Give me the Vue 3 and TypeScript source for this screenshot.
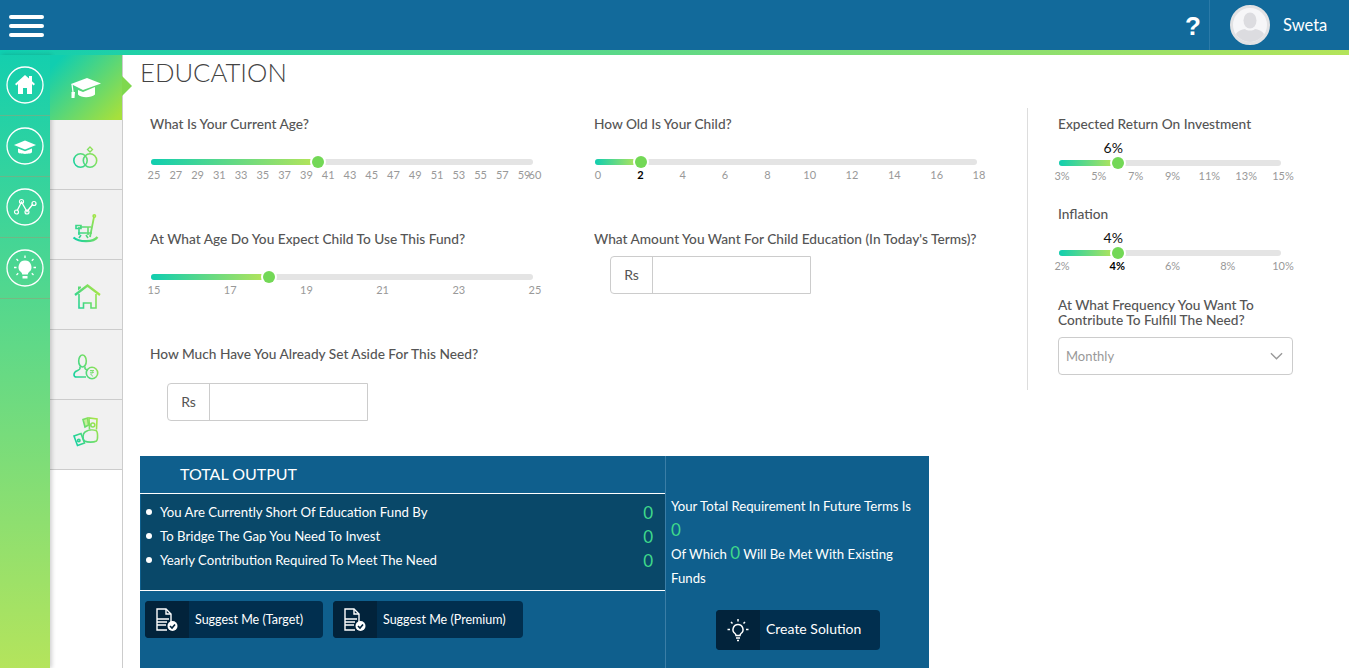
<script setup lang="ts">
interface Slider {
  kind: 'slider'
  label: string
  min: number
  max: number
  value: number
  ticks: number[]
  suffix?: string
  bubble?: boolean
}

interface Amount {
  kind: 'amount'
  label: string
  indent?: boolean
}

const range = (from: number, to: number, step: number) => {
  const out: number[] = []
  for (let i = from; i <= to; i += step) out.push(i)
  return out
}

const fields: (Slider | Amount)[] = [
  { kind: 'slider', label: 'What Is Your Current Age?', min: 25, max: 60, value: 40, ticks: [...range(25, 59, 2), 60] },
  { kind: 'slider', label: 'How Old Is Your Child?', min: 0, max: 18, value: 2, ticks: range(0, 18, 2) },
  { kind: 'slider', label: 'At What Age Do You Expect Child To Use This Fund?', min: 15, max: 25, value: 18, ticks: range(15, 25, 2) },
  { kind: 'amount', label: "What Amount You Want For Child Education (In Today's Terms)?" },
  { kind: 'amount', label: 'How Much Have You Already Set Aside For This Need?', indent: true }
]

const rates: Slider[] = [
  { kind: 'slider', label: 'Expected Return On Investment', min: 3, max: 15, value: 6, ticks: range(3, 15, 2), suffix: '%', bubble: true },
  { kind: 'slider', label: 'Inflation', min: 2, max: 10, value: 4, ticks: range(2, 10, 2), suffix: '%', bubble: true }
]

const outputs = [
  'You Are Currently Short Of Education Fund By',
  'To Bridge The Gap You Need To Invest',
  'Yearly Contribution Required To Meet The Need'
]

const pct = (s: Slider, v: number) => ((v - s.min) / (s.max - s.min)) * 100 + '%'
</script>

<template>
  <div class="page">
    <svg class="defs" width="0" height="0" aria-hidden="true">
      <defs>
        <linearGradient id="ico" gradientUnits="userSpaceOnUse" x1="3" y1="26" x2="29" y2="12">
          <stop offset="0" stop-color="#10d0a4" />
          <stop offset="1" stop-color="#a4e548" />
        </linearGradient>
      </defs>
    </svg>

    <header class="topbar">
      <div class="burger"><span></span><span></span><span></span></div>
      <div class="help">?</div>
      <div class="user">
        <svg class="avatar" viewBox="0 0 40 40">
          <circle cx="20" cy="20" r="18.500" fill="#f6f6f8" stroke="#e2e2e4" stroke-width="3" />
          <ellipse cx="20" cy="15.500" rx="6.500" ry="8" fill="#dcdce0" />
          <path d="M6 29c1.500-3 6-4.500 9-5 2 2 8 2 10 0 3 .5 7.500 2 9 5-2 4-8 8-14 8s-12-4-14-8z" fill="#dcdce0" />
        </svg>
        <span>Sweta</span>
      </div>
    </header>
    <div class="stripe"></div>

    <div class="body">
      <nav class="rail">
        <a class="rail-item">
          <svg viewBox="0 0 38 38">
            <circle cx="19" cy="19" r="18" class="ring" />
            <path d="M19 9l-10 9 1.400 1.500 1.600-1.400V28h5v-6h4v6h5v-9.900l1.600 1.400L29 18l-3-2.700V10h-3v2.600z" fill="#fff" />
          </svg>
        </a>
        <a class="rail-item">
          <svg viewBox="0 0 38 38">
            <circle cx="19" cy="19" r="18" class="ring" />
            <path d="M8 18l11-4.500L30 18l-11 4.500z" fill="#fff" />
            <path d="M12 21.500v3.500c0 2.500 14 2.500 14 0v-3.500l-7 2.800z" fill="#fff" />
          </svg>
        </a>
        <a class="rail-item">
          <svg viewBox="0 0 38 38">
            <circle cx="19" cy="19" r="18" class="ring" />
            <path d="M11 23l4.500-9 5.500 9.500 6-7.500" fill="none" stroke="#fff" stroke-width="1.300" />
            <circle cx="10.500" cy="24" r="2" class="node" />
            <circle cx="15.500" cy="13.500" r="2" class="node" />
            <circle cx="21" cy="24" r="2" class="node" />
            <circle cx="28" cy="15.500" r="2" class="node" />
          </svg>
        </a>
        <a class="rail-item">
          <svg viewBox="0 0 38 38">
            <circle cx="19" cy="19" r="18" class="ring" />
            <path d="M19 11.500a6.500 6.500 0 0 0-4 11.600c.8.700 1.200 1.500 1.200 2.400h5.600c0-.9.400-1.700 1.200-2.400a6.500 6.500 0 0 0-4-11.600z" fill="#fff" />
            <path d="M16.500 27h5v2.500h-5z" fill="#fff" />
            <path d="M19 6.500v2.500M10.500 10l1.700 1.700M27.500 10l-1.700 1.700M8 18.500h2.500M27.500 18.500H30M10.500 26l1.700-1.700M27.500 26l-1.700-1.700" stroke="#fff" stroke-width="1.300" fill="none" />
          </svg>
        </a>
      </nav>

      <aside class="goals">
        <a class="goal goal-active">
          <svg viewBox="0 0 32 24" class="cap">
            <path d="M1 8L17 2l14 5.500L13 14z" fill="#fff" />
            <path d="M8 14v4.500c3 3.500 13 3.500 17 0V11l-12 5z" fill="#fff" />
            <path d="M2 8l1 8" stroke="#fff" stroke-width="1.200" />
            <path d="M1.500 16h3.500l-.5 6h-3z" fill="#fff" />
          </svg>
        </a>
        <a class="goal">
          <svg viewBox="0 0 32 32" class="line-ico">
            <circle cx="10.500" cy="19.500" r="6.700" />
            <circle cx="20" cy="19.500" r="6.700" />
            <path d="M20 6l2.500 2.500L20 11l-2.500-2.500z" stroke-width="1.300" />
          </svg>
        </a>
        <a class="goal">
          <svg viewBox="0 0 32 32" class="line-ico">
            <path d="M24 6l-4 20" stroke-width="1.800" />
            <circle cx="24.300" cy="5" r="1.200" />
            <path d="M6 14.500h5v3H6zM10 16h11M8 22h14M9 16v8M18 16v8" />
            <path d="M11 24l-2 3M16 24l2 3" />
            <path d="M3.500 26.500c6 5 20 5 24-.5" stroke-width="2.200" />
          </svg>
        </a>
        <a class="goal">
          <svg viewBox="0 0 32 32" class="line-ico">
            <path d="M5 14L17.500 4.500 30 14" stroke-width="2.200" />
            <path d="M9 13v14h4.500v-5h7.500v5H26V13" />
            <path d="M8 9.500V5.500h3V7z" fill="url(#ico)" stroke="none" />
          </svg>
        </a>
        <a class="goal">
          <svg viewBox="0 0 32 32" class="line-ico">
            <ellipse cx="12.500" cy="10" rx="3.800" ry="6" />
            <path d="M10 15.500v2c0 1-1.500 1.500-3 2.200-2 .8-3 2-3 4 0 1.500 1 2.300 2.500 2.300H16" />
            <path d="M15 15.500v2c.2.800 1.500 1.300 3 1.700" />
            <circle cx="22" cy="22" r="5.700" />
            <path d="M20 19.500h4M20 21.300h4M21 19.500c2.400 0 2.400 3.600-.5 3.600l2.600 2.400" stroke-width=".9" />
          </svg>
        </a>
        <a class="goal">
          <svg viewBox="0 0 32 44" class="line-ico tall">
            <path d="M15 17c3-2 8-2.500 11-1.500 2 1 2 9 .5 10.500-3 1.500-9 1.500-12 0-2-1.500-2-7.500.5-9z" />
            <path d="M19.500 14.500L19 3l8 1-.5 10.500" />
            <circle cx="22.800" cy="10" r="2" />
            <path d="M13 4.500l4.500-1.500 1 7-3.500 2z" fill="#c9ee9c" />
            <path d="M4 21l7-2.500 3.500 9.500-7 2.500z" />
            <circle cx="8.800" cy="25.500" r="1.200" />
          </svg>
        </a>
      </aside>

      <main class="main">
        <h1 class="title">EDUCATION</h1>

        <div class="top">
          <section class="form">
            <div v-for="f in fields" :key="f.label" class="field">
              <label class="lbl">{{ f.label }}</label>
              <div v-if="f.kind === 'slider'" class="slider">
                <div class="track"></div>
                <div class="scale">
                  <div class="fill" :style="{ width: pct(f, f.value) }"></div>
                  <i class="thumb" :style="{ left: pct(f, f.value) }"></i>
                  <span v-for="t in f.ticks" :key="t" class="tick" :class="{ on: t === f.value }" :style="{ left: pct(f, t) }">{{ t }}</span>
                </div>
              </div>
              <div v-else class="amount" :class="{ indent: f.indent }">
                <span class="addon">Rs</span>
                <input class="amount-input" type="text" />
              </div>
            </div>
          </section>

          <section class="side">
            <div v-for="r in rates" :key="r.label" class="rate">
              <label class="lbl">{{ r.label }}</label>
              <div class="slider short">
                <div class="track"></div>
                <div class="scale">
                  <div class="fill" :style="{ width: pct(r, r.value) }"></div>
                  <i class="thumb" :style="{ left: pct(r, r.value) }"></i>
                  <b class="bubble" :style="{ left: pct(r, r.value) }">{{ r.value }}{{ r.suffix }}</b>
                  <span v-for="t in r.ticks" :key="t" class="tick" :class="{ on: t === r.value }" :style="{ left: pct(r, t) }">{{ t }}{{ r.suffix }}</span>
                </div>
              </div>
            </div>
            <label class="lbl lbl-two">At What Frequency You Want To Contribute To Fulfill The Need?</label>
            <div class="select">
              <span>Monthly</span>
              <svg viewBox="0 0 14 8" width="13" height="8"><path d="M1 1l6 6 6-6" fill="none" stroke="#999" stroke-width="1.500" /></svg>
            </div>
          </section>
        </div>

        <section class="output">
          <div class="out-left">
            <h2 class="out-title">TOTAL OUTPUT</h2>
            <ul class="out-list">
              <li v-for="o in outputs" :key="o"><span class="dot"></span><span class="out-text">{{ o }}</span><em class="zero">0</em></li>
            </ul>
            <div class="out-btns">
              <button class="btn" type="button">
                <span class="btn-ico">
                  <svg viewBox="0 0 24 24" width="24" height="24" class="doc">
                    <path d="M16 16V6l-5-5H2v21h10" />
                    <path d="M11 1v5h5M2 11h12M2 14h10M2 17h9" />
                    <circle cx="17.500" cy="18" r="5" fill="#fff" stroke="none" />
                    <path d="M15 18l2 2 3-3.500" stroke="#02233b" stroke-width="1.600" />
                  </svg>
                </span>
                <span class="btn-txt">Suggest Me (Target)</span>
              </button>
              <button class="btn btn-wide" type="button">
                <span class="btn-ico">
                  <svg viewBox="0 0 24 24" width="24" height="24" class="doc">
                    <path d="M16 16V6l-5-5H2v21h10" />
                    <path d="M11 1v5h5M2 11h12M2 14h10M2 17h9" />
                    <circle cx="17.500" cy="18" r="5" fill="#fff" stroke="none" />
                    <path d="M15 18l2 2 3-3.500" stroke="#02233b" stroke-width="1.600" />
                  </svg>
                </span>
                <span class="btn-txt">Suggest Me (Premium)</span>
              </button>
            </div>
          </div>
          <div class="out-right">
            <p>Your Total Requirement In Future Terms Is</p>
            <p class="big-line"><em class="zero">0</em></p>
            <p>Of Which <em class="zero">0</em> Will Be Met With Existing Funds</p>
            <button class="btn btn-create" type="button">
              <span class="btn-ico">
                <svg viewBox="0 0 24 24" width="24" height="24" fill="none" stroke="#fff" stroke-width="1.500">
                  <path d="M12 6.500a5 5 0 0 0-3 9c.6.500 1 1.200 1 2h4c0-.8.400-1.500 1-2a5 5 0 0 0-3-9z" />
                  <path d="M10 20h4M11 22.500h2M12 1v2.500M5 4l1.500 1.500M19 4l-1.500 1.500M1.500 11.500H4M20 11.500h2.500" />
                </svg>
              </span>
              <span class="btn-txt">Create Solution</span>
            </button>
          </div>
        </section>
      </main>
    </div>
  </div>
</template>

<style>
html,
body {
  margin: 0;
  overflow: hidden;
}
</style>

<style scoped>
.page {
  height: 668px;
  overflow: hidden;
  font-family: "Lato", "Open Sans", sans-serif;
  color: #555;
  display: flex;
  flex-direction: column;
}
.defs {
  position: absolute;
}
.topbar {
  height: 50px;
  flex: none;
  background: #126a9b;
  display: flex;
  align-items: stretch;
}
.burger {
  width: 35px;
  margin: 15px auto 0 9px;
  display: flex;
  flex-direction: column;
  gap: 5px;
}
.burger span {
  display: block;
  height: 4px;
  border-radius: 2px;
  background: #fff;
}
.help {
  width: 33px;
  padding-left: 1px;
  box-sizing: border-box;
  text-align: center;
  color: #fff;
  font: bold 26px/52px "Liberation Sans", sans-serif;
}
.user {
  width: 140px;
  border-left: 1px solid #2a7aa8;
  display: flex;
  align-items: center;
  padding-left: 20px;
  gap: 13px;
  box-sizing: border-box;
  color: #fff;
  font-size: 16.500px;
}
.avatar {
  width: 40px;
  height: 40px;
}
.stripe {
  height: 5px;
  flex: none;
  background: linear-gradient(90deg, #10ceb0, #b4e45a);
}
.body {
  flex: 1;
  display: flex;
  min-height: 0;
}
.rail {
  width: 50px;
  flex: none;
  background: linear-gradient(180deg, #14cfae, #b4e45c);
  position: relative;
  z-index: 1;
  box-shadow: 2px 0 4px rgba(0, 0, 0, 0.18);
}
.rail-item {
  height: 60px;
  border-bottom: 1px solid rgba(150, 160, 120, 0.55);
  display: flex;
  align-items: center;
  justify-content: center;
}
.rail-item svg {
  width: 38px;
  height: 38px;
}
.ring {
  fill: none;
  stroke: #fff;
  stroke-width: 1.300;
}
.node {
  fill: none;
  stroke: #fff;
  stroke-width: 1.200;
}
.goals {
  width: 73px;
  flex: none;
  box-sizing: border-box;
  border-right: 1px solid #ccc;
}
.goal {
  height: 69px;
  box-sizing: content-box;
  background: #f1f1f1;
  border-bottom: 1px solid #ccc;
  display: flex;
  align-items: center;
  justify-content: center;
  position: relative;
}
.goal:not(.goal-active) {
  height: 65px;
  padding-top: 4px;
}
.goal-active {
  height: 65px;
  border-bottom: 0;
  width: 72px;
  background: linear-gradient(135deg, #10ceb0 10%, #a6e03c 95%);
  z-index: 2;
}
.goal-active::after {
  content: "";
  position: absolute;
  left: 72px;
  top: 21px;
  border-style: solid;
  border-width: 10px 0 10px 10px;
  border-color: transparent transparent transparent #7fd84e;
}
.cap {
  width: 32px;
  height: 24px;
}
.line-ico {
  width: 32px;
  height: 32px;
  fill: none;
  stroke: url(#ico);
  stroke-width: 1.600;
}
.line-ico.tall {
  height: 44px;
}
.main {
  flex: 1;
  min-width: 0;
  padding-left: 17px;
}
.title {
  margin: 1px 0 0;
  height: 35px;
  font-size: 25.700px;
  line-height: 33px;
  font-weight: 300;
  color: #444;
}
.top {
  display: flex;
  height: 365px;
  padding-top: 17px;
  box-sizing: border-box;
}
.form {
  width: 887px;
  flex: none;
  box-sizing: border-box;
  padding: 6px 0 0 10px;
  display: grid;
  grid-template-columns: 444px 433px;
  grid-auto-rows: 115px;
}
.lbl {
  display: block;
  height: 20px;
  font-size: 13.700px;
  line-height: 20px;
  font-weight: 500;
  color: #555;
}
.slider {
  position: relative;
  width: 382px;
  margin: 25px 0 0 1px;
  height: 30px;
}
.slider.short {
  width: 222px;
  margin-top: 0;
}
.track {
  height: 6px;
  border-radius: 3px;
  background: #e4e4e4;
}
.scale {
  position: absolute;
  left: 3px;
  right: -2px;
  top: 0;
  height: 6px;
}
.fill {
  position: absolute;
  left: -3px;
  top: 0;
  height: 6px;
  border-radius: 3px 0 0 3px;
  background: linear-gradient(90deg, #10ceb0, #b4e45a);
}
.thumb {
  position: absolute;
  top: -3px;
  width: 12px;
  height: 12px;
  margin-left: -5px;
  border-radius: 50%;
  background: #73d856;
  box-shadow: 0 0 0 2px #fff;
}
.tick {
  position: absolute;
  top: 9px;
  transform: translateX(-50%);
  font-size: 11px;
  line-height: 14px;
  color: #999;
  white-space: nowrap;
}
.tick.on {
  color: #000;
  font-weight: 700;
}
.bubble {
  position: absolute;
  top: -21px;
  transform: translateX(-50%);
  margin-left: -4px;
  font-size: 14px;
  line-height: 18px;
  font-weight: 400;
  color: #111;
}
.amount {
  display: flex;
  width: 201px;
  height: 38px;
  margin: 7px 0 0 16px;
  box-sizing: border-box;
  border: 1px solid #ccc;
  border-radius: 4px 0 0 4px;
}
.amount.indent {
  margin: 19px 0 0 17px;
}
.addon {
  width: 42px;
  flex: none;
  box-sizing: border-box;
  border-right: 1px solid #ccc;
  text-align: center;
  font-size: 14px;
  line-height: 35px;
  color: #555;
}
.amount-input {
  flex: 1;
  min-width: 0;
  border: 0;
  outline: 0;
  padding: 0;
  background: #fff;
}
.side {
  width: 266px;
  height: 282px;
  box-sizing: border-box;
  border-left: 1px solid #ddd;
  padding: 6px 0 0 30px;
}
.rate {
  height: 90px;
}
.rate .lbl {
  margin-bottom: 26px;
}
.lbl-two {
  height: auto;
  line-height: 15px;
  margin-top: 3px;
}
.select {
  width: 235px;
  height: 38px;
  margin-top: 10px;
  box-sizing: border-box;
  border: 1px solid #ccc;
  border-radius: 4px;
  padding: 0 9px 0 7px;
  display: flex;
  align-items: center;
  justify-content: space-between;
  font-size: 13px;
  color: #999;
}
.output {
  width: 789px;
  height: 230px;
  background: #0f5f8d;
  display: flex;
  color: #fff;
}
.out-left {
  width: 525px;
  flex: none;
}
.out-title {
  margin: 0;
  height: 37px;
  padding-left: 40px;
  font-size: 16px;
  line-height: 35px;
  font-weight: 400;
}
.out-list {
  margin: 0;
  padding: 6px 0 0 5px;
  list-style: none;
  height: 98px;
  box-sizing: border-box;
  background: #094869;
  border-top: 1px solid #fff;
  border-bottom: 1px solid #fff;
  box-shadow: inset 1px 0 0 #0f5f8d;
}
.out-list li {
  display: flex;
  align-items: center;
  height: 24px;
  font-size: 13.200px;
  padding-right: 12px;
}
.dot {
  width: 6px;
  height: 6px;
  border-radius: 50%;
  background: #fff;
  margin: 0 8px 0 1px;
  flex: none;
}
.out-text {
  flex: 1;
}
.zero {
  font-style: normal;
  font-size: 17px;
  line-height: 1;
  color: #3fd98b;
}
.big-line {
  padding-top: 1px;
  height: 23px;
}
.out-btns {
  display: flex;
  gap: 10px;
  padding: 10px 0 0 5px;
}
.btn {
  width: 178px;
  height: 37px;
  padding: 0;
  border: 0;
  border-radius: 4px;
  background: #012f4f;
  color: #fff;
  font-family: inherit;
  font-size: 12.500px;
  display: flex;
  align-items: stretch;
  overflow: hidden;
}
.btn-wide {
  width: 190px;
}
.btn-ico {
  width: 44px;
  flex: none;
  background: #02233b;
  display: flex;
  align-items: center;
  justify-content: center;
}
.btn-txt {
  padding-left: 6px;
  align-self: center;
  white-space: nowrap;
}
.doc {
  fill: none;
  stroke: #fff;
  stroke-width: 1.400;
}
.out-right {
  flex: 1;
  border-left: 1px solid #3b7ea6;
  padding: 38px 5px 0 5px;
  font-size: 13.200px;
  line-height: 24px;
}
.out-right p {
  margin: 0;
}
.btn-create {
  width: 164px;
  height: 40px;
  margin: 20px 0 0 45px;
  font-size: 14px;
}
.btn-create .btn-txt {
  padding-bottom: 3px;
}
</style>
